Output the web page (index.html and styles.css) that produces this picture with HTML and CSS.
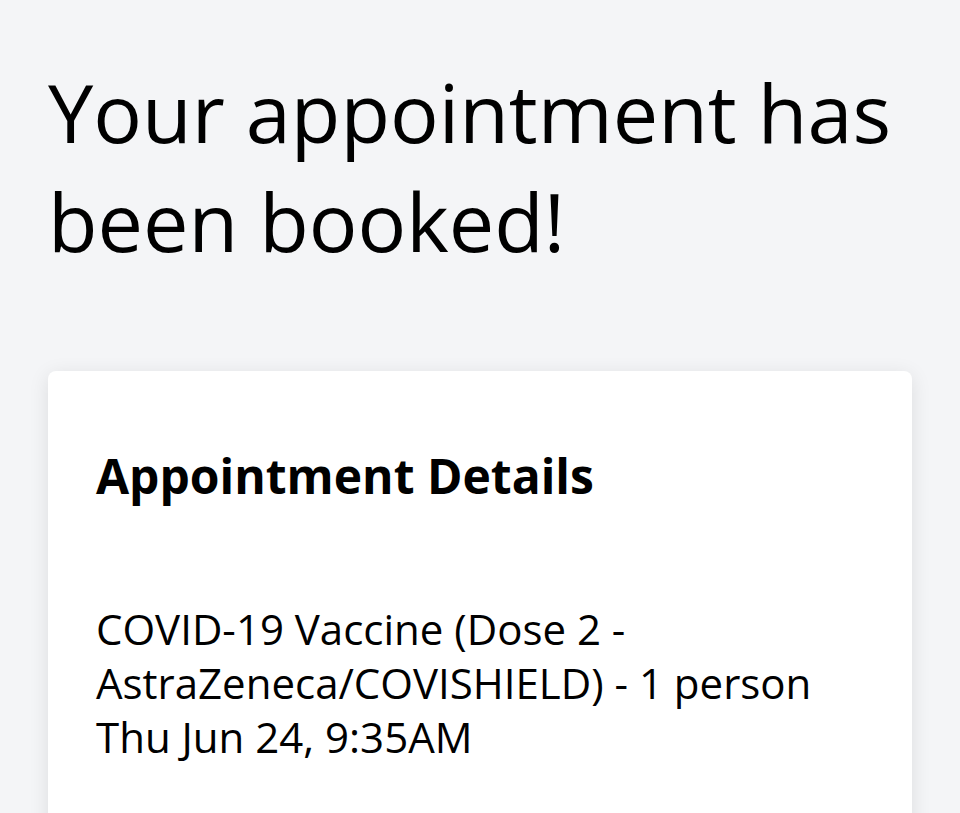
FILE: index.html
```html
<!DOCTYPE html>
<html lang="en">
<head>
<meta charset="utf-8">
<title>Appointment booked</title>
<link rel="stylesheet" href="styles.css">
</head>
<body>
<main class="page">
  <h1 class="title">Your appointment has been booked!</h1>
  <section class="card">
    <h2 class="card-title">Appointment Details</h2>
    <p class="details">COVID-19 Vaccine (Dose 2 - AstraZeneca/COVISHIELD) - 1 person<br>Thu Jun 24, 9:35AM</p>
  </section>
</main>
</body>
</html>
```
FILE: styles.css
```css
html, body {
  margin: 0;
  padding: 0;
  background: #f4f5f7;
}
body {
  font-family: "Open Sans", "Noto Sans", sans-serif;
  color: #000;
  overflow: hidden;
  height: 813px;
}
.page {
  padding: 57px 48px 0 48px;
}
.title {
  margin: 0;
  font-size: 81px;
  font-weight: 400;
  line-height: 109px;
  max-width: 864px;
}
.card {
  margin-top: 96px;
  background: #fff;
  border-radius: 8px;
  box-shadow: 0 4px 20px rgba(0, 0, 0, 0.10);
  padding: 73px 48px 160px 48px;
}
.card-title {
  margin: 0;
  font-size: 48px;
  font-weight: 700;
  line-height: 64px;
}
.details {
  margin: 94px 0 0 0;
  font-size: 42px;
  line-height: 54px;
}
```
